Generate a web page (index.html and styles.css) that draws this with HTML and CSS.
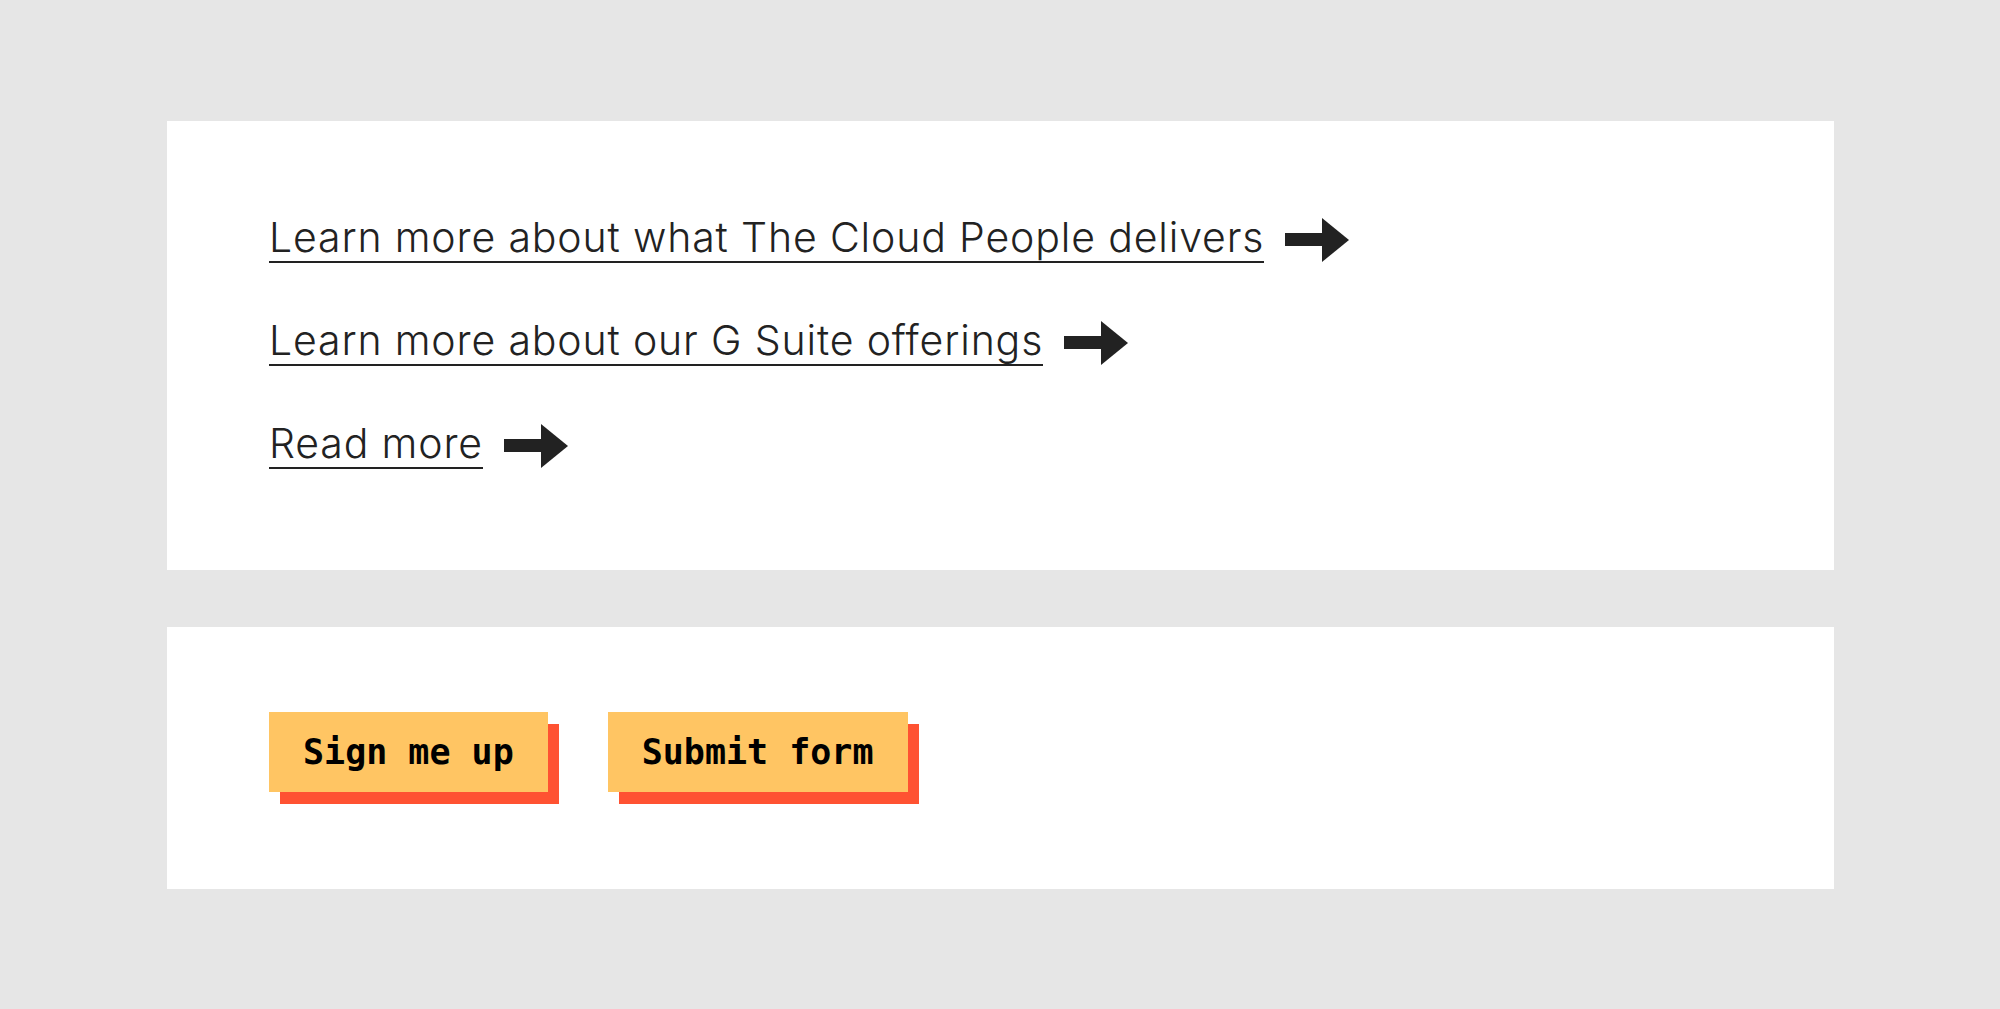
FILE: index.html
```html
<!DOCTYPE html>
<html>
<head>
<meta charset="UTF-8">
<title>Links and buttons</title>
<link rel="stylesheet" href="styles.css">
</head>
<body>

<!-- text links -->
<div class="panel panel_links">
	<div class="link_row">
		<a href="#" class="more_link">Learn more about what The Cloud People delivers</a>
		<svg class="arrow" width="64" height="44" viewBox="0 0 64 44"><rect x="0" y="15" width="38" height="13"/><polygon points="37,0 64,22 37,44"/></svg>
	</div>
	<div class="link_row">
		<a href="#" class="more_link">Learn more about our G Suite offerings</a>
		<svg class="arrow" width="64" height="44" viewBox="0 0 64 44"><rect x="0" y="15" width="38" height="13"/><polygon points="37,0 64,22 37,44"/></svg>
	</div>
	<div class="link_row">
		<a href="#" class="more_link">Read more</a>
		<svg class="arrow" width="64" height="44" viewBox="0 0 64 44"><rect x="0" y="15" width="38" height="13"/><polygon points="37,0 64,22 37,44"/></svg>
	</div>
</div>

<!-- buttons -->
<div class="panel panel_buttons">
	<button class="btn_block">Sign me up</button>
	<button class="btn_block">Submit form</button>
</div>

</body>
</html>
```

FILE: styles.css
```css
body{
	margin:0;
	padding:121px 166px 0 167px;
	background-color:#e6e6e6;
	font-family:Inter, "Noto Sans", sans-serif;
	color:#222222;
}
.panel{
	background-color:#ffffff;
	margin-bottom:57px;
}
.panel_links{
	display:flex; flex-direction:column; gap:53px;
	padding:92px 102px 101px;
}
.link_row{
	display:flex; align-items:center; gap:21px;
}
.more_link{
	font-size:41px; line-height:48px; font-weight:350;
	letter-spacing:0.85px;
	color:#222222; text-decoration:none;
	border-bottom:2px solid #222222;
}
.arrow{
	fill:#222222;
	margin-top:4px;
}
.panel_buttons{
	display:flex; gap:60px;
	padding:85px 102px 97px;
}
button.btn_block{
	height:80px; padding:0 34px;
	border:none; border-radius:0;
	background-color:#ffc563;
	box-shadow:11px 12px 0 #ff5232;
	font-family:"DejaVu Sans Mono", "Liberation Mono", monospace;
	font-weight:bold; font-size:35px;
	color:#000000;
}
```
